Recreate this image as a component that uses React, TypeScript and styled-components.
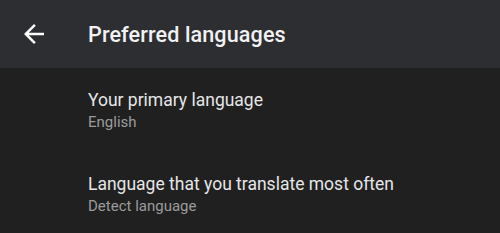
import React from "react";
import styled, {createGlobalStyle} from "styled-components";

const GlobalStyle = createGlobalStyle`
  html, body {
    margin: 0;
    padding: 0;
    background: #202021;
    font-family: Roboto, "Liberation Sans", Arial, sans-serif;
  }
`;

const Page = styled.div`
  width: 500px;
  height: 233px;
  background: #202021;
  overflow: hidden;
`;

const TopBar = styled.header`
  height: 68px;
  background: #2d2e31;
  display: flex;
  align-items: center;
`;

const BackButton = styled.button`
  width: 88px;
  height: 68px;
  padding: 0 0 0 19px;
  border: none;
  background: none;
  display: flex;
  align-items: center;
  color: #ffffff;
  cursor: pointer;
`;

const Title = styled.h1`
  margin: 0;
  font-size: 21.6px;
  font-weight: 500;
  color: #f1f1f1;
  letter-spacing: 0.1px;
`;

const List = styled.ul`
  margin: 0;
  padding: 0;
  list-style: none;
`;

const Row = styled.li`
  padding: 20px 24px 19px 88px;
  display: flex;
  flex-direction: column;
`;

const RowTitle = styled.span`
  font-size: 17.5px;
  line-height: 24px;
  color: #e6e6e6;
`;

const RowValue = styled.span`
  font-size: 15px;
  line-height: 21px;
  color: #9b9b9b;
`;

const ArrowBack = () => (
  <svg width="30" height="30" viewBox="0 0 24 24" fill="currentColor">
    <path d="M20 11H7.83l5.59-5.59L12 4l-8 8 8 8 1.41-1.41L7.83 13H20v-2z" />
  </svg>
);

const settings = [
  {title: "Your primary language", value: "English"},
  {title: "Language that you translate most often", value: "Detect language"}
];

const App = () => {
  return (
    <Page>
      <GlobalStyle />
      <TopBar>
        <BackButton aria-label="Back">
          <ArrowBack />
        </BackButton>
        <Title>Preferred languages</Title>
      </TopBar>
      <List>
        {settings.map((item, index) => (
          <Row key={index}>
            <RowTitle>{item.title}</RowTitle>
            <RowValue>{item.value}</RowValue>
          </Row>
        ))}
      </List>
    </Page>
  );
};

export default App;
